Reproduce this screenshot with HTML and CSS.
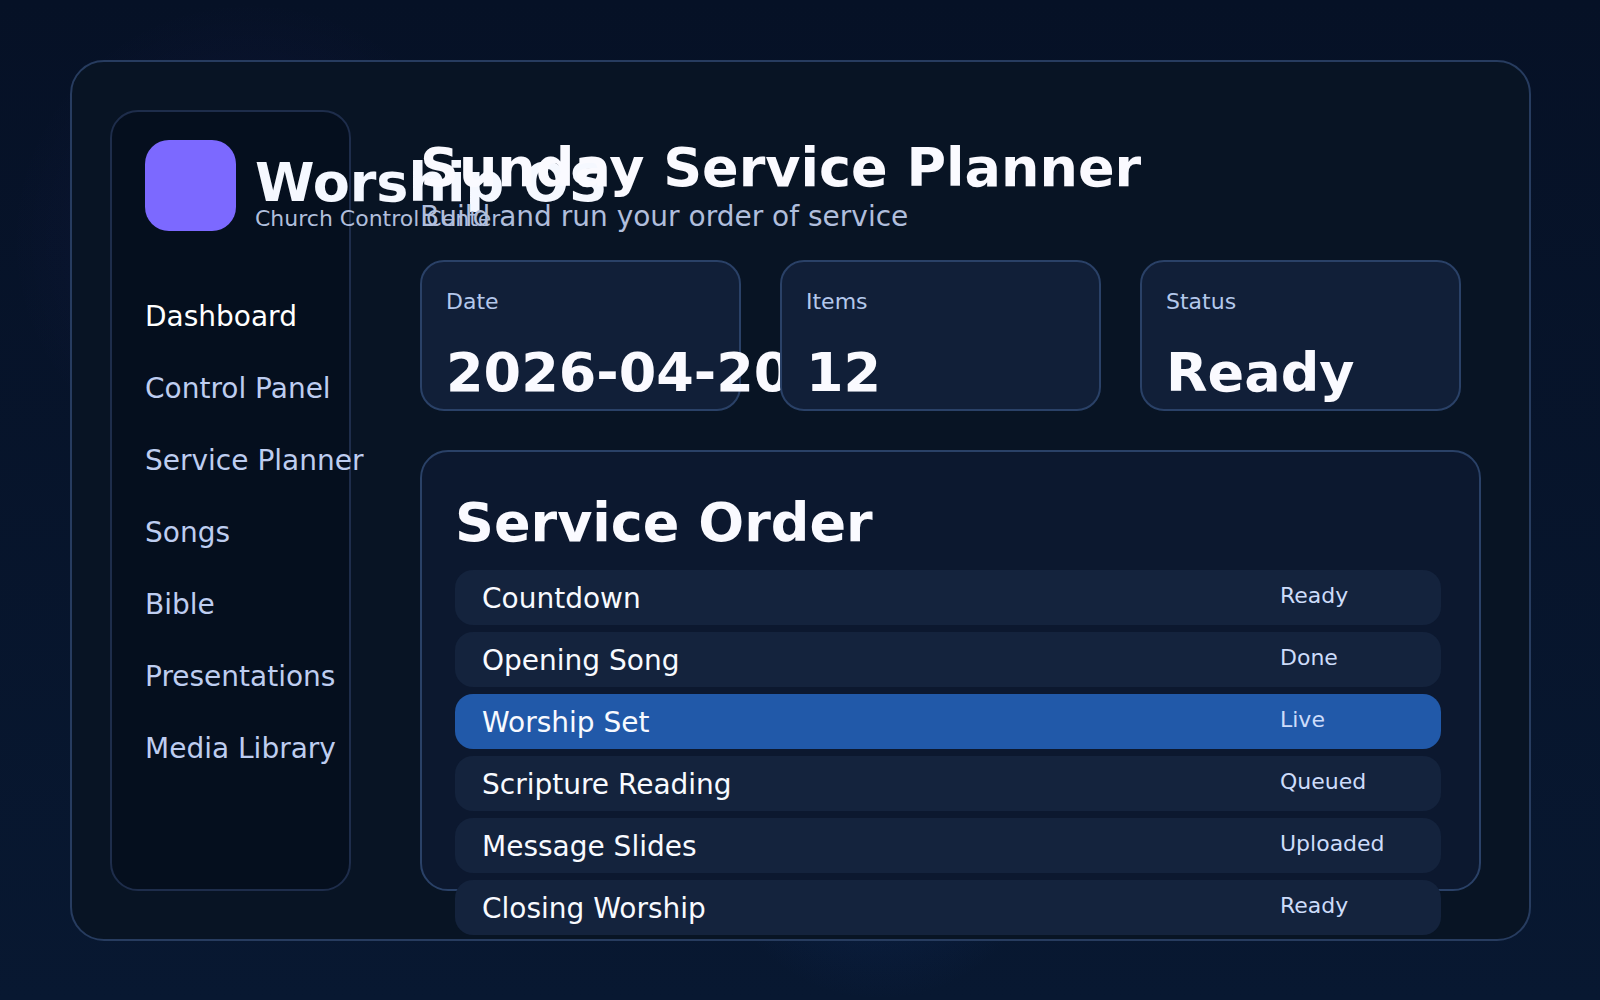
FILE: index.html
```html
<!DOCTYPE html>
<html lang="en">
  <head>
    <meta charset="UTF-8" />
    <meta name="viewport" content="width=device-width, initial-scale=1.0" />
    <title>Worship OS</title>
    <link rel="stylesheet" href="styles.css">
  </head>
  <body>
    <div class="shell">
      <aside class="sidebar">
        <div class="brand">
          <div class="logo"></div>
          <div class="brand-text">
            <div class="brand-name">Worship OS</div>
            <div class="brand-sub">Church Control Center</div>
          </div>
        </div>
        <nav class="nav">
          <a class="active" href="#">Dashboard</a>
          <a href="#">Control Panel</a>
          <a href="#">Service Planner</a>
          <a href="#">Songs</a>
          <a href="#">Bible</a>
          <a href="#">Presentations</a>
          <a href="#">Media Library</a>
        </nav>
      </aside>

      <main class="main">
        <h1>Sunday Service Planner</h1>
        <p class="subtitle">Build and run your order of service</p>

        <section class="cards">
          <div class="card">
            <div class="label">Date</div>
            <div class="value">2026-04-20</div>
          </div>
          <div class="card">
            <div class="label">Items</div>
            <div class="value">12</div>
          </div>
          <div class="card">
            <div class="label">Status</div>
            <div class="value">Ready</div>
          </div>
        </section>

        <section class="panel">
          <h2>Service Order</h2>
          <ol class="order">
            <li class="row"><span>Countdown</span><span class="state">Ready</span></li>
            <li class="row"><span>Opening Song</span><span class="state">Done</span></li>
            <li class="row live"><span>Worship Set</span><span class="state">Live</span></li>
            <li class="row"><span>Scripture Reading</span><span class="state">Queued</span></li>
            <li class="row"><span>Message Slides</span><span class="state">Uploaded</span></li>
            <li class="row"><span>Closing Worship</span><span class="state">Ready</span></li>
          </ol>
        </section>
      </main>
    </div>
  </body>
</html>
```

FILE: styles.css
```css
* {
  margin: 0;
  padding: 0;
  box-sizing: border-box;
}

body {
  min-height: 100vh;
  display: flex;
  padding: 60px 69px 59px 70px;
  background:
    radial-gradient(circle 240px at 250px 240px, rgba(124, 70, 255, 0.08), transparent),
    radial-gradient(circle 170px at 880px 830px, rgba(33, 89, 200, 0.16), transparent),
    linear-gradient(#061126, #081831);
  color: #f8faff;
  font-family: "DejaVu Sans", sans-serif;
  font-size: 28px;
  line-height: 33px;
  white-space: nowrap;
}

.shell {
  flex: 1;
  display: flex;
  gap: 69px;
  padding: 48px 48px 48px 38px;
  background: #081424;
  border: 2px solid #273c5f;
  border-radius: 34px;
}

/* sidebar */
.sidebar {
  flex: none;
  width: 241px;
  padding: 28px 33px;
  background: #050f1e;
  border: 2px solid #1e2d4b;
  border-radius: 28px;
}

.brand {
  display: flex;
  gap: 19px;
  margin-bottom: 69px;
}

.logo {
  flex: none;
  width: 91px;
  height: 91px;
  background: #7c69ff;
  border-radius: 24px;
}

.brand-text {
  padding-top: 19px;
}

.brand-name {
  color: #f5f8ff;
  font-size: 54px;
  font-weight: bold;
  line-height: 48px;
}

.brand-sub {
  color: #b0bedc;
  font-size: 22px;
  line-height: 24px;
}

.nav {
  display: flex;
  flex-direction: column;
  gap: 39px;
}

.nav a {
  color: #becdf0;
  text-decoration: none;
}

.nav a.active {
  color: #ffffff;
}

/* main column */
.main {
  flex: 1;
  min-width: 0;
  display: flex;
  flex-direction: column;
  padding-top: 26px;
}

h1,
h2,
.value {
  color: #fafaff;
  font-size: 54px;
  font-weight: bold;
  line-height: 63px;
}

.subtitle {
  margin: 1px 0 27px;
  color: #b0bedc;
}

.cards {
  display: grid;
  grid-template-columns: repeat(3, minmax(0, 1fr));
  gap: 39px;
  margin: 0 20px 39px 0;
}

.card {
  padding: 26px 24px 5px;
  background: #111f38;
  border: 2px solid #2a4167;
  border-radius: 24px;
}

.label {
  margin-bottom: 25px;
  color: #b4c8eb;
  font-size: 22px;
  line-height: 28px;
}

.panel {
  flex: 1;
  padding: 39px 38px 0 33px;
  background: #0c182f;
  border: 2px solid #2a4167;
  border-radius: 28px;
}

/* the last row hangs over the panel's bottom edge */
.order {
  display: grid;
  gap: 7px;
  margin: 16px 0 -46px;
  list-style: none;
}

.row {
  display: grid;
  grid-template-columns: 1fr 161px;
  padding: 12px 0 10px 27px;
  background: #14233d;
  border-radius: 18px;
}

.row.live {
  background: #2159a9;
}

.state {
  color: #cddcfa;
  font-size: 22px;
  line-height: 28px;
}
```
